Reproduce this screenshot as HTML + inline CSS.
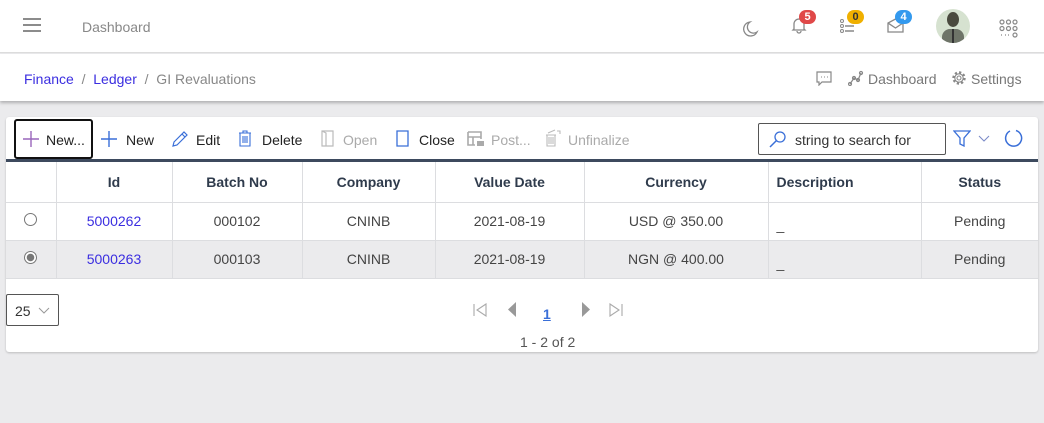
<!DOCTYPE html>
<html><head><meta charset="utf-8"><style>
*{box-sizing:border-box;margin:0;padding:0}
body{width:1044px;height:423px;background:#ebebed;font-family:"Liberation Sans",sans-serif;position:relative;overflow:hidden;color:#333}
.a{position:absolute}
.hdr{left:0;top:0;width:1044px;height:53px;background:#fff;border-bottom:1px solid #dcdcdc}
.bc{left:0;top:54px;width:1044px;height:47px;background:#fff;box-shadow:0 2px 3px rgba(0,0,0,.25)}
.card{left:6px;top:117px;width:1032px;height:235px;background:#fff;border-radius:3px;box-shadow:0 1px 2px rgba(0,0,0,.2)}
.t{font-size:14px;white-space:nowrap}
.badge{position:absolute;height:14px;min-width:17px;border-radius:8px;color:#fff;font-size:11px;font-weight:bold;text-align:center;line-height:14px}
table{border-collapse:collapse;position:absolute;left:0;top:45px;width:1032px;font-size:14px}
th,td{border:1px solid #dcdde0;text-align:center;color:#333}
th{height:40px;font-weight:bold;color:#2f3b4c}
td{height:38px;color:#444}
tr.g td{background:#ebebed}
tr:first-child th{border-top:none}
</style></head><body>
<div class="a hdr">
 <svg class="a" style="left:23px;top:18px" width="18" height="14"><path d="M0 1H18M0 7H18M0 13H18" stroke="#666" stroke-width="1.6"/></svg>
 <div class="a t" style="left:82px;top:19px;color:#888">Dashboard</div>
 <svg class="a" style="left:741px;top:20px" width="18" height="18"><path d="M9 2A7 7 0 1 0 16 12A6 6 0 0 1 9 2Z" fill="none" stroke="#888" stroke-width="1.3"/></svg>
 <svg class="a" style="left:791px;top:16px" width="16" height="18"><path d="M3 13V8A5 5 0 0 1 13 8V13L14 14H2ZM6 15A2 2 0 0 0 10 15" fill="none" stroke="#888" stroke-width="1.3"/></svg>
 <div class="badge" style="left:799px;top:10px;background:#e04848">5</div>
 <svg class="a" style="left:840px;top:19px" width="15" height="14"><circle cx="2" cy="2" r="1.5" fill="none" stroke="#888"/><circle cx="2" cy="7" r="1.5" fill="none" stroke="#888"/><circle cx="2" cy="12" r="1.5" fill="none" stroke="#888"/><path d="M5 7H14M5 12H14" stroke="#888" stroke-width="1.5"/></svg>
 <div class="badge" style="left:847px;top:10px;background:#f0b000;color:#333">0</div>
 <svg class="a" style="left:887px;top:18px" width="17" height="15"><path d="M1 5V14H16V5L8.5 1ZM1 5L8.5 10L16 5" fill="none" stroke="#888" stroke-width="1.3"/></svg>
 <div class="badge" style="left:895px;top:10px;background:#3399ee">4</div>
 <div class="a" style="left:936px;top:9px;width:34px;height:34px;border-radius:50%;background:#d6e2d0;overflow:hidden"><div class="a" style="left:11px;top:3px;width:12px;height:15px;border-radius:50%;background:#4a4a3e"></div><div class="a" style="left:6px;top:20px;width:22px;height:16px;border-radius:8px 8px 0 0;background:#6e7468"></div><div class="a" style="left:16px;top:20px;width:2px;height:14px;background:#333"></div></div>
 <svg class="a" style="left:999px;top:19px" width="19" height="19" fill="none" stroke="#888" stroke-width="1.2"><circle cx="3" cy="3" r="2"/><circle cx="9.5" cy="3" r="2"/><circle cx="16" cy="3" r="2"/><circle cx="3" cy="9.5" r="2"/><circle cx="9.5" cy="9.5" r="2"/><circle cx="16" cy="9.5" r="2"/><circle cx="16" cy="16" r="2"/><path d="M2 16H3M6 16H7M9 16H10" /></svg>
</div>
<div class="a bc">
 <div class="a t" style="left:24px;top:17px"><span style="color:#3b2ee0">Finance</span><span style="color:#888"> &nbsp;/&nbsp; </span><span style="color:#3b2ee0">Ledger</span><span style="color:#888"> &nbsp;/&nbsp; GI Revaluations</span></div>
 <svg class="a" style="left:816px;top:17px" width="16" height="15"><path d="M1 1H15V11H6L3 14V11H1Z" fill="none" stroke="#888" stroke-width="1.2"/><path d="M5 6H6M8 6H9M11 6H12" stroke="#888"/></svg>
 <svg class="a" style="left:848px;top:16px" width="16" height="16" fill="none" stroke="#888" stroke-width="1.2"><path d="M2 14L6 8L10 10L13 3"/><circle cx="2" cy="14" r="1.5"/><circle cx="6" cy="8" r="1.5"/><circle cx="10" cy="10" r="1.5"/><circle cx="13" cy="3" r="1.5"/></svg>
 <div class="a t" style="left:868px;top:17px;color:#777">Dashboard</div>
 <svg class="a" style="left:951px;top:16px" width="16" height="16"><circle cx="8" cy="8" r="5.5" fill="none" stroke="#888" stroke-width="2.4" stroke-dasharray="2.2 2.1"/><circle cx="8" cy="8" r="4.2" fill="none" stroke="#888" stroke-width="1.1"/><circle cx="8" cy="8" r="2" fill="none" stroke="#888" stroke-width="1.1"/></svg>
 <div class="a t" style="left:971px;top:17px;color:#777">Settings</div>
</div>
<div class="a card">
 <div class="a" style="left:8px;top:2px;width:79px;height:40px;border:2px solid #111;border-radius:3px"></div>
 <svg class="a" style="left:17px;top:14px" width="16" height="16"><path d="M8 0V16M0 8H16" stroke="#9966bb" stroke-width="1.4"/></svg>
 <div class="a t" style="left:40px;top:15px;color:#222">New...</div>
 <svg class="a" style="left:95px;top:14px" width="16" height="16"><path d="M8 0V16M0 8H16" stroke="#3a6fd8" stroke-width="1.4"/></svg>
 <div class="a t" style="left:120px;top:15px;color:#222">New</div>
 <svg class="a" style="left:166px;top:14px" width="16" height="16"><path d="M1 15L2 11L12 1L15 4L5 14ZM10 3L13 6" fill="none" stroke="#3a6fd8" stroke-width="1.2"/></svg>
 <div class="a t" style="left:190px;top:15px;color:#222">Edit</div>
 <svg class="a" style="left:232px;top:13px" width="14" height="17"><path d="M1 3H13M5 3V1H9V3M2 3V16H12V3M5 6V13M7 6V13M9 6V13" fill="none" stroke="#3a6fd8" stroke-width="1.1"/></svg>
 <div class="a t" style="left:256px;top:15px;color:#222">Delete</div>
 <svg class="a" style="left:315px;top:13px" width="13" height="17"><path d="M1 1H12V16H1ZM1 1L5 3V16" fill="none" stroke="#bbb" stroke-width="1.2"/></svg>
 <div class="a t" style="left:337px;top:15px;color:#aaa">Open</div>
 <svg class="a" style="left:390px;top:13px" width="13" height="17"><path d="M1 1H12V16H1Z" fill="none" stroke="#3a6fd8" stroke-width="1.3"/></svg>
 <div class="a t" style="left:413px;top:15px;color:#222">Close</div>
 <svg class="a" style="left:461px;top:14px" width="18" height="16"><path d="M1 1H14V8M1 1V14H8M1 6H14M6 6V14" fill="none" stroke="#aaa" stroke-width="1.6"/><rect x="10" y="10" width="7" height="5" fill="#aaa"/></svg>
 <div class="a t" style="left:485px;top:15px;color:#aaa">Post...</div>
 <svg class="a" style="left:538px;top:12px" width="17" height="18"><path d="M2 6H12M3 6V17H11V6M5 8V15M7 8V15M9 8V15M4 4L11 1M13 2H16V5" fill="none" stroke="#bbb" stroke-width="1.1"/></svg>
 <div class="a t" style="left:562px;top:15px;color:#aaa">Unfinalize</div>
 <div class="a" style="left:752px;top:6px;width:188px;height:32px;border:1px solid #555;border-radius:2px"></div>
 <svg class="a" style="left:763px;top:14px" width="17" height="17"><circle cx="11" cy="6" r="5" fill="none" stroke="#3a6fd8" stroke-width="1.3"/><path d="M7.5 9.5L1 16" stroke="#3a6fd8" stroke-width="1.5"/></svg>
 <div class="a t" style="left:789px;top:15px;color:#333">string to search for</div>
 <svg class="a" style="left:947px;top:13px" width="18" height="17"><path d="M1 1H17L11 8V16L7 14V8Z" fill="none" stroke="#3a6fd8" stroke-width="1.3"/></svg>
 <svg class="a" style="left:972px;top:18px" width="12" height="7"><path d="M1 1L6 6L11 1" fill="none" stroke="#7b8bc8" stroke-width="1.1"/></svg>
 <svg class="a" style="left:998px;top:11px" width="20" height="20"><path d="M12 2.5A8 8 0 1 1 6 3" fill="none" stroke="#3a6fd8" stroke-width="1.5"/></svg>
 <div class="a" style="left:0;top:42px;width:1032px;height:3px;background:#3d4a5e"></div>
 <table>
  <colgroup><col style="width:50px"><col style="width:116px"><col style="width:130px"><col style="width:133px"><col style="width:149px"><col style="width:184px"><col style="width:153px"><col></colgroup>
  <tr><th style="border-left:none"></th><th>Id</th><th>Batch No</th><th>Company</th><th>Value Date</th><th>Currency</th><th style="text-align:left;padding-left:8px">Description</th><th style="border-right:none">Status</th></tr>
  <tr><td style="border-left:none"><span style="display:inline-block;width:13px;height:13px;border:1px solid #777;border-radius:50%;vertical-align:middle;margin-top:-6px"></span></td><td style="color:#3b2ee0">5000262</td><td>000102</td><td>CNINB</td><td>2021-08-19</td><td>USD @ 350.00</td><td style="text-align:left;padding-left:8px;padding-top:8px">_</td><td style="border-right:none">Pending</td></tr>
  <tr class="g"><td style="border-left:none"><span style="display:inline-block;width:13px;height:13px;border:1px solid #777;border-radius:50%;vertical-align:middle;margin-top:-6px;background:radial-gradient(#777 0 3.5px,#fff 4px)"></span></td><td style="color:#3b2ee0">5000263</td><td>000103</td><td>CNINB</td><td>2021-08-19</td><td>NGN @ 400.00</td><td style="text-align:left;padding-left:8px;padding-top:8px">_</td><td style="border-right:none">Pending</td></tr>
 </table>
 <div class="a" style="left:0;top:177px;width:53px;height:32px;border:1px solid #555;border-radius:2px"></div>
 <div class="a t" style="left:9px;top:186px;color:#333">25</div>
 <svg class="a" style="left:32px;top:190px" width="12" height="7"><path d="M1 1L6 6L11 1" fill="none" stroke="#999" stroke-width="1"/></svg>
 <svg class="a" style="left:467px;top:186px" width="14" height="14"><path d="M1 1V13M13 1L4 7L13 13Z" fill="none" stroke="#aaa" stroke-width="1.1"/></svg>
 <svg class="a" style="left:501px;top:185px" width="10" height="15"><path d="M9 0L1 7.5L9 15Z" fill="#999"/></svg>
 <div class="a t" style="left:537px;top:189px;color:#3a6fd8;font-weight:bold;text-decoration:underline">1</div>
 <svg class="a" style="left:575px;top:185px" width="10" height="15"><path d="M1 0L9 7.5L1 15Z" fill="#999"/></svg>
 <svg class="a" style="left:603px;top:186px" width="14" height="14"><path d="M13 1V13M1 1L10 7L1 13Z" fill="none" stroke="#aaa" stroke-width="1.1"/></svg>
 <div class="a t" style="left:514px;top:217px;color:#555">1 - 2 of 2</div>
</div>
</body></html>
